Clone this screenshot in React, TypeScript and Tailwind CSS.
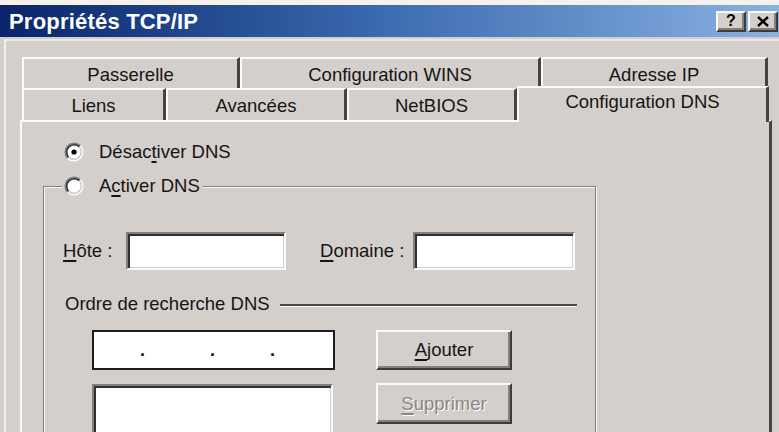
import React from "react";

const raised =
  "border-2 border-t-[#fafafa] border-l-[#fafafa] border-b-[#3c3c3c] border-r-[#3c3c3c] shadow-[inset_-2px_-2px_0_#808080]";
const sunken =
  "bg-white border-2 border-t-[#808080] border-l-[#808080] border-b-[#fafafa] border-r-[#fafafa] shadow-[inset_2px_2px_0_#303030,inset_-1px_-1px_0_#d4cfca]";

function Radio({ checked }: { checked?: boolean }) {
  return (
    <svg width="20" height="20" viewBox="0 0 20 20" className="shrink-0">
      <circle cx="10" cy="10" r="7" fill="#fff" />
      <path d="M3.64 16.36 A9 9 0 0 1 16.36 3.64" stroke="#808080" strokeWidth="1.6" fill="none" />
      <path d="M16.36 3.64 A9 9 0 0 1 3.64 16.36" stroke="#fafafa" strokeWidth="1.6" fill="none" />
      <path d="M4.7 15.3 A7.5 7.5 0 0 1 15.3 4.7" stroke="#303030" strokeWidth="1.6" fill="none" />
      <path d="M15.3 4.7 A7.5 7.5 0 0 1 4.7 15.3" stroke="#d4cfca" strokeWidth="1.6" fill="none" />
      {checked && <circle cx="10" cy="10" r="2.6" fill="#000" />}
    </svg>
  );
}

function Tab({ label, w, selected }: { label: string; w: string; selected?: boolean }) {
  return (
    <div
      className={`${w} flex items-center justify-center border-l-2 border-t-2 border-l-[#fafafa] border-t-[#fafafa] border-r-[3px] border-r-[#444] ${
        selected ? "relative z-10 h-[36px] -mb-[2px] pb-[6px] bg-[#d4cfca]" : "h-full pt-[2px]"
      }`}
    >
      {label}
    </div>
  );
}

export default function App() {
  return (
    <div
      className="w-[779px] h-[432px] overflow-hidden bg-[#d4cfca] text-[18.5px] text-[#151515]"
      style={{ fontFamily: '"Liberation Sans", Arial, sans-serif' }}
    >
      <div className="h-[5px] bg-[#f4f2ef]" />
      <div className="h-[32px] flex items-center justify-between pl-[9px] pr-[1px] bg-gradient-to-r from-[#0a246a] via-[#3d6cb0] to-[#8ab1e2]">
        <span className="text-white font-bold text-[22px] tracking-[0.2px]">Propriétés TCP/IP</span>
        <div className="flex gap-[2px]">
          <div className={`${raised} w-[30px] h-[21px] bg-[#d4cfca] flex items-center justify-center font-bold text-[16px] leading-none text-black`}>
            ?
          </div>
          <div className={`${raised} w-[30px] h-[21px] bg-[#d4cfca] flex items-center justify-center`}>
            <svg width="12" height="11" viewBox="0 0 12 11">
              <path d="M1 1 L11 10 M11 1 L1 10" stroke="#000" strokeWidth="2.4" />
            </svg>
          </div>
        </div>
      </div>

      <div className="ml-[4px] h-[395px] border-l-2 border-l-[#f0eeea]">
        <div className="h-[2px] mt-[2px] bg-[#ebe8e4]" />

        <div className="flex h-[31px] ml-[16px] mt-[16px]">
          <Tab label="Passerelle" w="w-[218px]" />
          <Tab label="Configuration WINS" w="w-[301px]" />
          <Tab label="Adresse IP" w="w-[227px]" />
        </div>
        <div className="flex items-end h-[32px] ml-[16px]">
          <Tab label="Liens" w="w-[144px]" />
          <Tab label="Avancées" w="w-[181px]" />
          <Tab label="NetBIOS" w="w-[170px]" />
          <Tab label="Configuration DNS" w="w-[252px]" selected />
        </div>

        <div className="ml-[14px] w-[752px] h-[320px] border-l-2 border-t-2 border-l-[#fafafa] border-t-[#fafafa] border-r-[3px] border-r-[#444]">
          <div className="flex items-center h-[20px] mt-[20px] ml-[42px]">
            <Radio checked />
            <span className="ml-[15px]">
              Désac<u className="decoration-[1.5px] underline-offset-[3px]">t</u>iver DNS
            </span>
          </div>

          <div className="mt-[24px] ml-[21px] w-[553px] h-[300px] border border-[#808080] shadow-[inset_1px_1px_0_#fafafa,1px_1px_0_#fafafa]">
            <div className="flex items-center w-fit h-[20px] -mt-[11px] ml-[18px] pl-[2px] pr-[3px] bg-[#d4cfca]">
              <Radio />
              <span className="ml-[15px]">
                A<u className="decoration-[1.5px] underline-offset-[3px]">c</u>tiver DNS
              </span>
            </div>

            <div className="flex items-center mt-[36px] pl-[19px]">
              <span className="w-[63px]">
                <u className="decoration-[1.5px] underline-offset-[3px]">H</u>ôte :
              </span>
              <div className={`${sunken} w-[160px] h-[38px]`} />
              <span className="w-[93px] ml-[34px]">
                <u className="decoration-[1.5px] underline-offset-[3px]">D</u>omaine :
              </span>
              <div className={`${sunken} w-[162px] h-[38px]`} />
            </div>

            <div className="flex items-center h-[22px] mt-[23px] pl-[21px] pr-[18px]">
              <span>Ordre de recherche DNS</span>
              <div className="flex-1 ml-[10px] mt-[2px] border-t-2 border-t-[#4a4a4a] border-b border-b-[#fafafa]" />
            </div>

            <div className="flex mt-[15px] pl-[48px]">
              <div className="flex flex-col">
                <div className="w-[243px] h-[40px] bg-white border-2 border-[#1c1c1c] flex items-center text-[18px] font-bold">
                  <span className="w-[46px]" />
                  <span className="w-[70px]">.</span>
                  <span className="w-[60px]">.</span>
                  <span>.</span>
                </div>
                <div className={`${sunken} w-[241px] h-[80px] mt-[14px]`} />
              </div>
              <div className="flex flex-col ml-[41px]">
                <div className={`${raised} w-[136px] h-[40px] flex items-center justify-center`}>
                  <span>
                    <u className="decoration-[1.5px] underline-offset-[3px]">A</u>jouter
                  </span>
                </div>
                <div
                  className={`${raised} w-[136px] h-[41px] mt-[13px] flex items-center justify-center text-[#8a8783] [text-shadow:1px_1px_0_#fff]`}
                >
                  <span>
                    <u className="decoration-[1.5px] underline-offset-[3px]">S</u>upprimer
                  </span>
                </div>
              </div>
            </div>
          </div>
        </div>
      </div>
    </div>
  );
}
